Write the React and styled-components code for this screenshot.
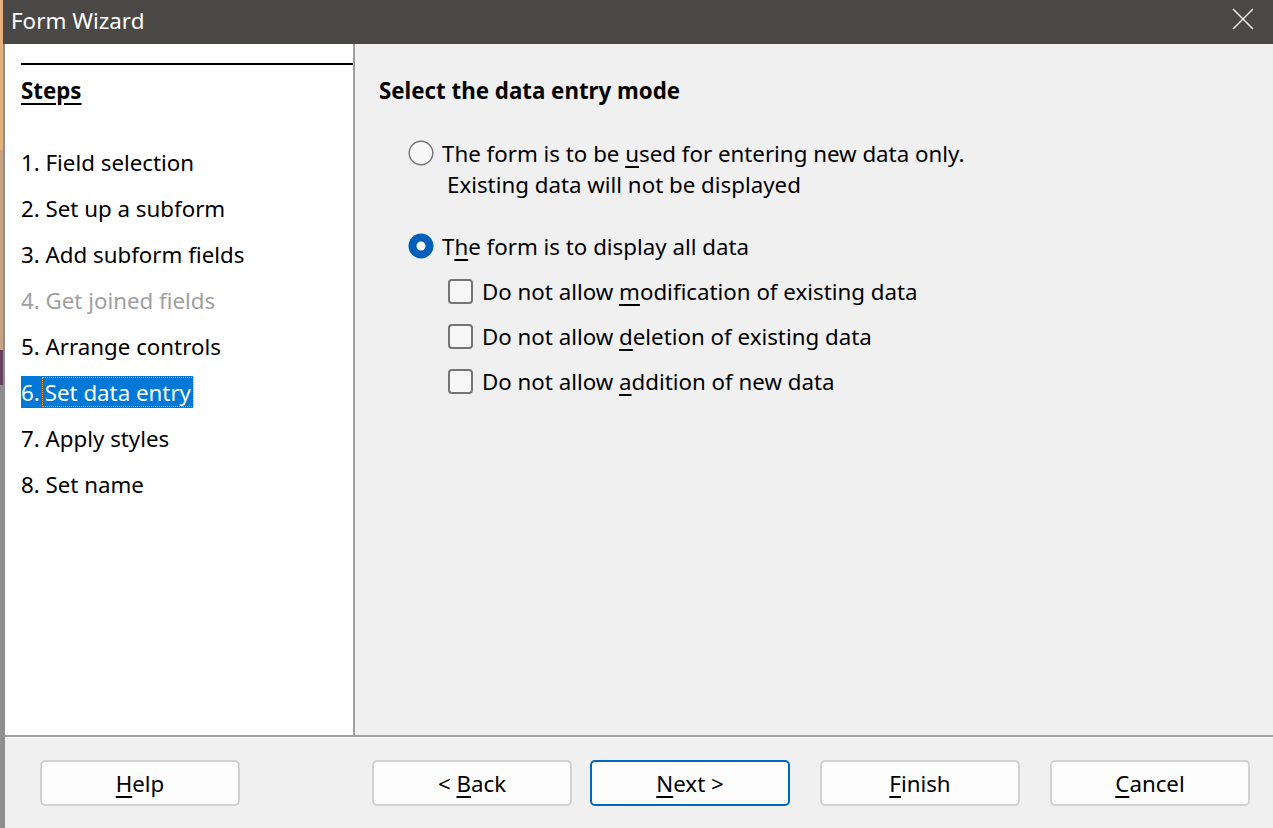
import React from 'react';
import styled, { createGlobalStyle } from 'styled-components';

const GlobalStyle = createGlobalStyle`
  html, body {
    margin: 0;
    height: 100%;
  }
  body {
    font-family: "Noto Sans", "Open Sans", sans-serif;
    background: #f0f0f0;
    overflow: hidden;
  }
  #root {
    height: 100%;
  }
`;

const steps = [
  { n: '1.', label: 'Field selection' },
  { n: '2.', label: 'Set up a subform' },
  { n: '3.', label: 'Add subform fields' },
  { n: '4.', label: 'Get joined fields', disabled: true },
  { n: '5.', label: 'Arrange controls' },
  { n: '6.', label: 'Set data entry', selected: true },
  { n: '7.', label: 'Apply styles' },
  { n: '8.', label: 'Set name' },
];

function RadioMark({ checked }) {
  return (
    <svg width="26" height="26" viewBox="0 0 26 26">
      {checked ? (
        <>
          <circle cx="13" cy="13" r="12.5" fill="#005fb8" />
          <circle cx="13" cy="13" r="4.5" fill="#ffffff" />
        </>
      ) : (
        <circle cx="13" cy="13" r="11.8" fill="#f7f7f7" stroke="#727272" strokeWidth="1.4" />
      )}
    </svg>
  );
}

function App() {
  return (
    <>
      <GlobalStyle />
      <Screen>
        <DesktopEdge />
        <Window>
          <TitleBar>
            <Title>Form Wizard</Title>
            <CloseButton>
              <svg width="22" height="22" viewBox="0 0 22 22">
                <path d="M1 1 L21 21 M21 1 L1 21" stroke="#f2f2f2" strokeWidth="1.5" />
              </svg>
            </CloseButton>
          </TitleBar>
          <Frame>
            <Body>
              <StepsPanel>
                <StepsRule />
                <StepsTitle>Steps</StepsTitle>
                <StepList>
                  {steps.map((s) => (
                    <StepItem key={s.n} $disabled={s.disabled}>
                      {s.selected ? (
                        <Selected>
                          {s.n}
                          <FocusText>{s.label}</FocusText>
                        </Selected>
                      ) : (
                        <span>
                          {s.n} {s.label}
                        </span>
                      )}
                    </StepItem>
                  ))}
                </StepList>
              </StepsPanel>
              <Content>
                <Heading>Select the data entry mode</Heading>
                <RadioRow $top={32}>
                  <RadioMark />
                  <span>
                    The form is to be <U>u</U>sed for entering new data only.
                  </span>
                </RadioRow>
                <SubLine>Existing data will not be displayed</SubLine>
                <RadioRow $top={31}>
                  <RadioMark checked />
                  <span>
                    T<U>h</U>e form is to display all data
                  </span>
                </RadioRow>
                <CheckList>
                  <CheckRow>
                    <CheckBox />
                    <span>
                      Do not allow <U>m</U>odification of existing data
                    </span>
                  </CheckRow>
                  <CheckRow>
                    <CheckBox />
                    <span>
                      Do not allow <U>d</U>eletion of existing data
                    </span>
                  </CheckRow>
                  <CheckRow>
                    <CheckBox />
                    <span>
                      Do not allow <U>a</U>ddition of new data
                    </span>
                  </CheckRow>
                </CheckList>
              </Content>
            </Body>
            <Footer>
              <Button>
                <span>
                  <U>H</U>elp
                </span>
              </Button>
              <Button $gap={132}>
                <span>
                  {'< '}
                  <U>B</U>ack
                </span>
              </Button>
              <Button $gap={18} $default>
                <span>
                  <U>N</U>ext {'>'}
                </span>
              </Button>
              <Button $gap={30}>
                <span>
                  <U>F</U>inish
                </span>
              </Button>
              <Button $gap={30}>
                <span>
                  <U>C</U>ancel
                </span>
              </Button>
            </Footer>
          </Frame>
        </Window>
      </Screen>
    </>
  );
}

export default App;

const Screen = styled.div`
  display: flex;
  width: 1273px;
  height: 828px;
`;

const DesktopEdge = styled.div`
  width: 3px;
  flex-shrink: 0;
  background: linear-gradient(
    #e6b07c 0 150px,
    #c8a382 150px 350px,
    #6a3f5e 350px 385px,
    #8f8f8f 385px
  );
`;

const Window = styled.div`
  flex: 1;
  min-width: 0;
  display: flex;
  flex-direction: column;
`;

const TitleBar = styled.div`
  height: 44px;
  flex-shrink: 0;
  display: flex;
  align-items: center;
  justify-content: space-between;
  background: #4a4846;
  color: #ffffff;
`;

const Title = styled.div`
  padding: 0 0 4px 8px;
  font-size: 22.4px;
`;

const CloseButton = styled.div`
  width: 60px;
  height: 44px;
  display: flex;
  align-items: center;
  justify-content: center;
  padding-bottom: 6px;
  box-sizing: border-box;
`;

const Frame = styled.div`
  flex: 1;
  display: flex;
  flex-direction: column;
  border-left: 2px solid #8e8e8e;
  min-height: 0;
`;

const Body = styled.div`
  flex: 1;
  display: flex;
  min-height: 0;
  border-bottom: 2px solid #a0a0a0;
  font-size: 22.3px;
  color: #000;
`;

const StepsPanel = styled.div`
  width: 350px;
  flex-shrink: 0;
  background: #ffffff;
  border-right: 2px solid #a0a0a0;
  padding: 19px 0 0 16px;
  box-sizing: border-box;
`;

const StepsRule = styled.div`
  border-top: 2px solid #000;
`;

const StepsTitle = styled.div`
  margin-top: 11px;
  line-height: 30px;
  font-weight: 700;
  text-decoration: underline;
  text-underline-offset: 4px;
`;

const StepList = styled.div`
  margin-top: 33px;
  display: flex;
  flex-direction: column;
`;

const StepItem = styled.div`
  height: 46px;
  display: flex;
  align-items: center;
  color: ${(p) => (p.$disabled ? '#a0a0a0' : '#000')};
`;

const Selected = styled.span`
  display: flex;
  align-items: center;
  height: 32px;
  background: #0078d7;
  color: #ffffff;
`;

const FocusText = styled.span`
  display: flex;
  align-items: center;
  height: 28px;
  margin-left: 3px;
  padding: 0 2px;
  outline: 1px dotted #ff9a2e;
  outline-offset: 0;
`;

const Content = styled.div`
  flex: 1;
  background: #f0f0f0;
  padding: 32px 0 0 24px;
`;

const Heading = styled.div`
  line-height: 30px;
  font-weight: 700;
`;

const RadioRow = styled.div`
  display: flex;
  align-items: center;
  gap: 8px;
  height: 30px;
  margin-top: ${(p) => p.$top}px;
  padding-left: 29px;
`;

const SubLine = styled.div`
  line-height: 30px;
  margin-top: 2px;
  padding-left: 68px;
`;

const CheckList = styled.div`
  margin-top: 15px;
  display: flex;
  flex-direction: column;
  gap: 15px;
`;

const CheckRow = styled.div`
  display: flex;
  align-items: center;
  gap: 9px;
  height: 30px;
  padding-left: 69px;
`;

const CheckBox = styled.span`
  width: 21px;
  height: 21px;
  border: 2px solid #747474;
  border-radius: 4px;
  background: #f6f6f6;
`;

const U = styled.span`
  text-decoration: underline;
  text-underline-offset: 4px;
`;

const Footer = styled.div`
  height: 91px;
  flex-shrink: 0;
  display: flex;
  align-items: flex-start;
  padding: 22px 0 0 35px;
  box-sizing: border-box;
  border-top: 1px solid #ffffff;
  background: #f0f0f0;
`;

const Button = styled.div`
  width: 200px;
  height: 46px;
  margin-left: ${(p) => p.$gap || 0}px;
  display: flex;
  align-items: center;
  justify-content: center;
  box-sizing: border-box;
  border: 2px solid ${(p) => (p.$default ? '#0067c0' : '#d2d2d2')};
  border-radius: 5px;
  background: #fdfdfd;
  font-size: 22.3px;
  color: #000;
`;
